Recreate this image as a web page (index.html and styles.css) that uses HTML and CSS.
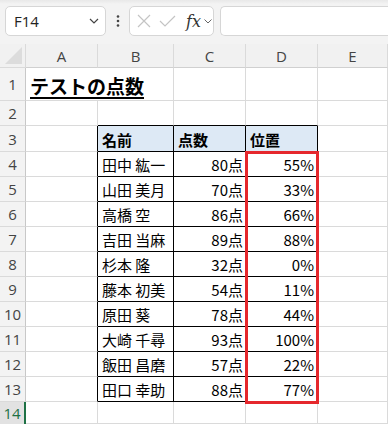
FILE: index.html
```html
<!DOCTYPE html>
<html lang="ja">
<head>
    <meta charset="UTF-8">
    <meta name="viewport" content="width=device-width, initial-scale=1.0">
    <title>テストの点数</title>
    <link rel="stylesheet" href="styles.css">
</head>
<body>
    <!-- name box + formula bar -->
    <div class="toolbar">
        <div class="namebox">
            <span>F14</span>
            <svg class="chev" width="10" height="6" viewBox="0 0 10 6"><path d="M1 1 L5 5 L9 1" fill="none" stroke="#444" stroke-width="1.2"/></svg>
        </div>
        <svg class="dots" width="4" height="12" viewBox="0 0 4 12">
            <circle cx="2" cy="1.5" r="1.3" fill="#444"/>
            <circle cx="2" cy="6" r="1.3" fill="#444"/>
            <circle cx="2" cy="10.5" r="1.3" fill="#444"/>
        </svg>
        <div class="fxgroup">
            <svg width="14" height="14" viewBox="0 0 14 14"><path d="M1 1 L13 13 M13 1 L1 13" stroke="#c4c4c4" stroke-width="1.2" fill="none"/></svg>
            <svg width="17" height="14" viewBox="0 0 17 14"><path d="M1 7 L6 12 L16 2" stroke="#c4c4c4" stroke-width="1.2" fill="none"/></svg>
            <span class="fx">fx</span>
            <svg width="8" height="5" viewBox="0 0 8 5"><path d="M0.5 0.5 L4 4 L7.5 0.5" fill="none" stroke="#666" stroke-width="1"/></svg>
        </div>
        <div class="formula"></div>
    </div>

    <!-- worksheet grid -->
    <div class="sheet">
        <div class="c corner"><span class="tri"></span></div>
        <div class="c ch">A</div>
        <div class="c ch">B</div>
        <div class="c ch">C</div>
        <div class="c ch">D</div>
        <div class="c ch">E</div>

        <div class="c rh">1</div>
        <div class="c title"><span>テストの点数</span></div>
        <div class="c"></div>
        <div class="c"></div>
        <div class="c"></div>

        <div class="c rh">2</div>
        <div class="c"></div>
        <div class="c edge-b"></div>
        <div class="c edge-b"></div>
        <div class="c edge-b"></div>
        <div class="c"></div>

        <div class="c rh">3</div>
        <div class="c edge-r"></div>
        <div class="c t th">名前</div>
        <div class="c t th">点数</div>
        <div class="c t th">位置</div>
        <div class="c"></div>

        <div class="c rh">4</div>
        <div class="c edge-r"></div>
        <div class="c t">田中 紘一</div>
        <div class="c t num">80点</div>
        <div class="c"></div>

        <div class="c rh">5</div>
        <div class="c edge-r"></div>
        <div class="c t">山田 美月</div>
        <div class="c t num">70点</div>
        <div class="c"></div>

        <div class="c rh">6</div>
        <div class="c edge-r"></div>
        <div class="c t">高橋 空</div>
        <div class="c t num">86点</div>
        <div class="c"></div>

        <div class="c rh">7</div>
        <div class="c edge-r"></div>
        <div class="c t">吉田 当麻</div>
        <div class="c t num">89点</div>
        <div class="c"></div>

        <div class="c rh">8</div>
        <div class="c edge-r"></div>
        <div class="c t">杉本 隆</div>
        <div class="c t num">32点</div>
        <div class="c"></div>

        <div class="c rh">9</div>
        <div class="c edge-r"></div>
        <div class="c t">藤本 初美</div>
        <div class="c t num">54点</div>
        <div class="c"></div>

        <div class="c rh">10</div>
        <div class="c edge-r"></div>
        <div class="c t">原田 葵</div>
        <div class="c t num">78点</div>
        <div class="c"></div>

        <div class="c rh">11</div>
        <div class="c edge-r"></div>
        <div class="c t">大崎 千尋</div>
        <div class="c t num">93点</div>
        <div class="c"></div>

        <div class="c rh">12</div>
        <div class="c edge-r"></div>
        <div class="c t">飯田 昌磨</div>
        <div class="c t num">57点</div>
        <div class="c"></div>

        <div class="c rh">13</div>
        <div class="c edge-r"></div>
        <div class="c t">田口 幸助</div>
        <div class="c t num">88点</div>
        <div class="c"></div>

        <div class="c rh active">14</div>
        <div class="c"></div>
        <div class="c"></div>
        <div class="c"></div>
        <div class="c"></div>
        <div class="c"></div>

        <!-- D4:D13, highlighted -->
        <div class="pick">
            <div class="c t num">55%</div>
            <div class="c t num">33%</div>
            <div class="c t num">66%</div>
            <div class="c t num">88%</div>
            <div class="c t num">0%</div>
            <div class="c t num">11%</div>
            <div class="c t num">44%</div>
            <div class="c t num">100%</div>
            <div class="c t num">22%</div>
            <div class="c t num">77%</div>
        </div>
    </div>
</body>
</html>
```

FILE: styles.css
```css
body {
    margin: 0;
    width: 388px;
    height: 424px;
    overflow: hidden;
    background-color: #fff;
    font-family: "Noto Sans CJK JP", sans-serif;
    color: #000;
}

/* top bar */
.toolbar {
    height: 44px;
    box-sizing: border-box;
    padding: 6px 0 8px 5px;
    display: flex;
    align-items: stretch;
    background: linear-gradient(#e8e8e8, #f3f3f3 4px);
}

.namebox {
    width: 101px;
    box-sizing: border-box;
    display: flex;
    align-items: center;
    justify-content: space-between;
    padding: 0 6px 0 8px;
    background-color: #fff;
    border: 1px solid #d6d6d6;
    border-radius: 5px;
    font-family: "Open Sans", "Noto Sans", sans-serif;
    font-size: 15px;
    color: #222;
}

.dots {
    align-self: center;
    margin: 0 9px 0 10px;
}

.fxgroup {
    width: 85px;
    box-sizing: border-box;
    display: flex;
    align-items: center;
    gap: 8px;
    padding-left: 7px;
    background-color: #fff;
    border: 1px solid #d6d6d6;
    border-radius: 5px;
}

.fx {
    font-family: "DejaVu Serif", serif;
    font-style: italic;
    font-size: 16px;
    color: #333;
    margin-left: 2px;
    margin-right: -5px;
}

.formula {
    flex: 1;
    margin-left: 6px;
    background-color: #fff;
    border: 1px solid #d6d6d6;
    border-right: none;
    border-radius: 5px 0 0 5px;
}

/* grid */
.sheet {
    display: grid;
    grid-template-columns: 26px 72px 76px 72px 72px 1fr;
    grid-template-rows: 24px 33px 25px 26px repeat(10, 25px) 1fr;
    height: 380px;
}

.c {
    border-right: 1px solid #dadada;
    border-bottom: 1px solid #dadada;
    min-width: 0;
    white-space: nowrap;
}

.ch, .rh, .corner {
    background-color: #f1f1f1;
    font-family: "Open Sans", "Noto Sans", sans-serif;
    font-size: 15px;
    color: #444;
    display: flex;
    align-items: center;
    justify-content: center;
}

.ch {
    border-bottom-color: #d0d0d0;
}

.rh {
    border-right-color: #c8c8c8;
    background-color: #f3f3f3;
}

.rh.active {
    background-color: #e2e2e2;
    color: #1e7145;
    border-right: 2px solid #1e7145;
    border-bottom: none;
}

.corner {
    align-items: flex-end;
    justify-content: flex-end;
    padding: 0 3px 3px 0;
}

.tri {
    width: 0;
    height: 0;
    border-left: 17px solid transparent;
    border-bottom: 17px solid #dcdcdc;
}

.title {
    grid-column: span 2;
    display: flex;
    align-items: center;
    padding: 2px 0 0 4px;
    font-size: 19px;
    font-weight: bold;
    text-decoration: underline;
    text-underline-offset: 3px;
    text-decoration-thickness: 2px;
}

/* table borders */
.edge-r {
    border-right-color: #000;
}

.edge-b {
    border-bottom-color: #000;
}

.t {
    border-right-color: #000;
    border-bottom-color: #000;
    font-size: 15px;
    display: flex;
    align-items: center;
    padding: 1px 3px 0 4px;
}

.th {
    background-color: #dde9f5;
    font-weight: bold;
}

.num {
    justify-content: flex-end;
    padding-right: 2px;
}

.pick {
    grid-column: 5;
    grid-row: 5 / span 10;
    position: relative;
    display: flex;
    flex-direction: column;
}

.pick .c {
    height: 25px;
    box-sizing: border-box;
    padding-right: 3px;
}

.pick::after {
    content: "";
    position: absolute;
    top: -1px;
    left: -1px;
    right: -1px;
    bottom: -2px;
    border: 3px solid #e5282d;
}
```
